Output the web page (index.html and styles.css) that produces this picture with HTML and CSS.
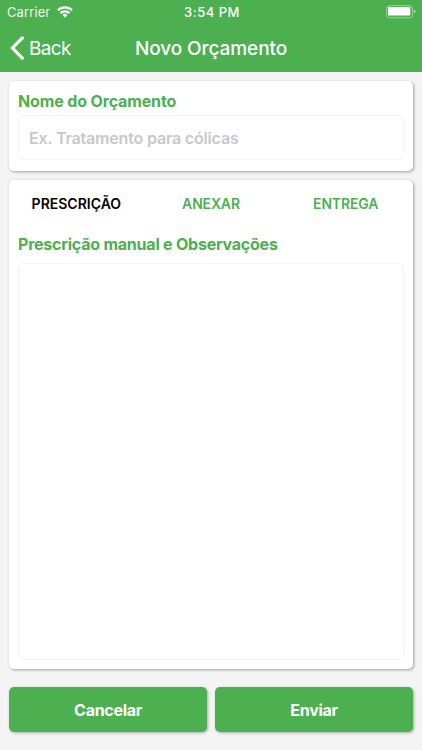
FILE: index.html
```html
<!DOCTYPE html>
<html lang="pt-BR">
<head>
<meta charset="utf-8">
<title>Novo Orçamento</title>
<link rel="stylesheet" href="styles.css">
</head>
<body>
<header class="header">
  <div class="status">
    <div class="status-left">
      <span class="carrier">Carrier</span>
      <svg class="wifi" width="16" height="12" viewBox="0 0 16 12" fill="none" stroke="#fff" stroke-width="2.2">
        <path d="M.9 4.3a10.2 10.2 0 0 1 14.2 0"/>
        <path d="M3.5 7.1a6.5 6.5 0 0 1 9 0"/>
        <path d="M5.6 9a3.4 3.4 0 0 1 4.8 0L8 11.5z" fill="#fff" stroke="none"/>
      </svg>
    </div>
    <span class="time">3:54 PM</span>
    <svg class="battery" width="30" height="14" viewBox="0 0 30 14">
      <rect x=".6" y=".6" width="26" height="12.2" rx="3" fill="none" stroke="#fff" stroke-opacity=".45"/>
      <rect x="2" y="2" width="22.3" height="8.6" rx="1" fill="#fff"/>
      <path d="M28 4.6c2 .8 2 3.4 0 4.2z" fill="#fff" fill-opacity=".6"/>
    </svg>
  </div>
  <nav class="nav">
    <a class="back">
      <svg width="14" height="24" viewBox="0 0 14 24" fill="none" stroke="#fff" stroke-width="3.2" stroke-linecap="round" stroke-linejoin="miter"><path d="M12.3 1.9 2.4 12l9.9 10.1"/></svg>
      <span class="back-label">Back</span>
    </a>
    <h1 class="title">Novo Orçamento</h1>
  </nav>
</header>
<main class="content">
  <section class="card name-card">
    <label class="label name-label" for="name">Nome do Orçamento</label>
    <input class="field name-field" id="name" placeholder="Ex. Tratamento para cólicas">
  </section>
  <section class="card main-card">
    <div class="tabs">
      <span class="tab active">PRESCRIÇÃO</span>
      <span class="tab">ANEXAR</span>
      <span class="tab">ENTREGA</span>
    </div>
    <label class="label notes-label" for="notes">Prescrição manual e Observações</label>
    <textarea class="field notes" id="notes"></textarea>
  </section>
  <div class="actions">
    <button class="button">Cancelar</button>
    <button class="button">Enviar</button>
  </div>
</main>
</body>
</html>
```
FILE: styles.css
```css
* { box-sizing: border-box; }
body {
  margin: 0;
  height: 750px;
  overflow: hidden;
  display: flex;
  flex-direction: column;
  background: #f4f4f4;
  font-family: Inter, "Liberation Sans", sans-serif;
}
.header { height: 72px; background: #4caf50; color: #fff; }
.status {
  height: 24px;
  display: grid;
  grid-template-columns: 1fr auto 1fr;
  align-items: center;
  padding: 0 6px 0 7px;
}
.status-left { display: flex; align-items: center; gap: 7px; }
.carrier { font-size: 13px; letter-spacing: 0.1px; opacity: .9; }
.time { font-size: 13px; font-weight: 500; letter-spacing: 0.5px; padding-left: 1px; }
.battery { justify-self: end; }
.nav {
  height: 48px;
  display: grid;
  grid-template-columns: 1fr auto 1fr;
  align-items: center;
  padding: 0 10px;
}
.back { display: flex; align-items: center; gap: 5px; }
.back-label { font-size: 19px; letter-spacing: -0.65px; }
.title { margin: 0; font-size: 19px; font-weight: 500; letter-spacing: -0.08px; }
.content { padding: 9px; }
.card {
  display: flex;
  flex-direction: column;
  background: #fff;
  border-radius: 5px;
  box-shadow: 1px 1px 3px rgba(0, 0, 0, .36);
  padding: 0 9px 9px;
}
.name-card { height: 90px; margin-bottom: 9px; padding-top: 10px; }
.main-card { height: 489px; margin-bottom: 18px; }
.label { color: #4caf50; font-size: 16px; line-height: 20px; font-weight: 700; letter-spacing: -0.14px; }
.name-label { margin-bottom: 4px; }
.notes-label { margin: 8px 0 9px; letter-spacing: -0.22px; }
.field {
  display: block;
  width: 100%;
  border: 1px solid #f4f4f4;
  border-radius: 5px;
  background: #fff;
  outline: 0;
  resize: none;
  font: 600 16px Inter, sans-serif;
}
.name-field { height: 45px; padding: 0 10px; letter-spacing: -0.17px; }
.name-field::placeholder { color: #c7c7cd; opacity: 1; }
.notes { flex: 1; }
.tabs { display: grid; grid-template-columns: repeat(3, 1fr); height: 46px; margin: 0 -9px; align-items: center; }
.tab { text-align: center; color: #4caf50; font-size: 14px; font-weight: 600; letter-spacing: -0.15px; }
.active { color: #000; letter-spacing: 0; }
.actions { display: grid; grid-template-columns: 1fr 1fr; gap: 8px; }
.button {
  height: 45px;
  padding: 0;
  border: 0;
  border-radius: 5px;
  background: #4caf50;
  color: #fff;
  font: 700 16px Inter, sans-serif;
  letter-spacing: -0.3px;
  box-shadow: 1px 1px 3px rgba(0, 0, 0, .3);
}
```
